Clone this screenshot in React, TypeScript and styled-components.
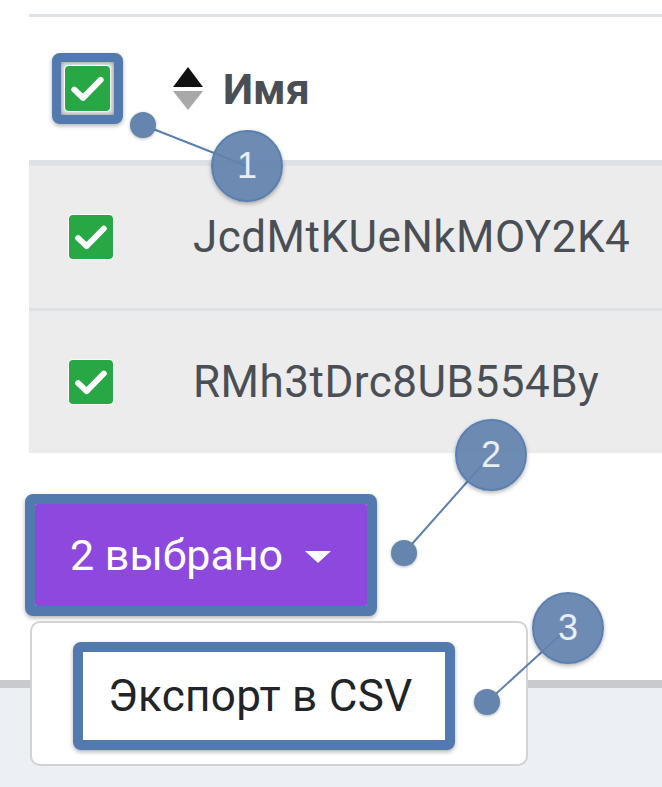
import React from "react";
import styled, { createGlobalStyle } from "styled-components";

const GlobalStyle = createGlobalStyle`
  html, body {
    margin: 0;
    padding: 0;
    background: #ffffff;
  }
  body {
    font-family: Roboto, "Noto Sans", Arial, sans-serif;
  }
`;

const Page = styled.div`
  position: relative;
  width: 662px;
  height: 787px;
  overflow: hidden;
  display: flex;
  flex-direction: column;
`;

const Table = styled.div`
  margin: 14px 0 0 29px;
  border-top: 3px solid #dee2e6;
  display: flex;
  flex-direction: column;
`;

const HeaderRow = styled.div`
  display: flex;
  align-items: center;
  height: 143px;
  padding-left: 23px;
  border-bottom: 6px solid #dee2e6;
  background: #ffffff;
`;

const Row = styled.div<{ $last?: boolean }>`
  display: flex;
  align-items: center;
  height: 142px;
  padding-left: 40px;
  background: #ececec;
  border-bottom: ${(p) => (p.$last ? "none" : "3px solid #dee2e6")};
`;

const Highlight = styled.div<{ $border: number; $pad?: number }>`
  display: inline-flex;
  align-items: center;
  border: ${(p) => p.$border}px solid #527aae;
  border-radius: 8px;
  padding: ${(p) => p.$pad ?? 0}px;
  box-shadow: 0 2px 4px rgba(0, 0, 0, 0.3), inset 0 0 5px rgba(0, 0, 0, 0.45);
  background: #e9e9e9;
`;

const CheckBox = styled.span<{ $size: number }>`
  display: inline-flex;
  align-items: center;
  justify-content: center;
  width: ${(p) => p.$size}px;
  height: ${(p) => p.$size}px;
  background: #28a745;
  border-radius: 4px;
  box-shadow: 0 0 0 1px #ffffff;
  flex-shrink: 0;
`;

const Check = ({ size }: { size: number }) => (
  <CheckBox $size={size}>
    <svg width={size} height={size} viewBox="0 0 24 24">
      <path
        d="M5 12.6l4.6 4.4L19 7.4"
        fill="none"
        stroke="#ffffff"
        strokeWidth="3.2"
        strokeLinecap="round"
        strokeLinejoin="round"
      />
    </svg>
  </CheckBox>
);

const SortIcon = styled.span`
  display: inline-flex;
  flex-direction: column;
  gap: 4px;
  margin-left: 50px;
  margin-right: 20px;
`;

const Arrow = styled.span<{ $down?: boolean }>`
  width: 0;
  height: 0;
  border-left: 15px solid transparent;
  border-right: 15px solid transparent;
  ${(p) =>
    p.$down
      ? "border-top: 19px solid #a9a9a9;"
      : "border-bottom: 20px solid #111111;"}
`;

const HeaderTitle = styled.span`
  font-family: Roboto, "Noto Sans", sans-serif;
  font-weight: 700;
  font-size: 43px;
  color: #4a4f55;
  line-height: 1;
  margin-top: 2px;
`;

const CellText = styled.span`
  font-family: Roboto, "Noto Sans", sans-serif;
  font-size: 44px;
  color: #4a4f55;
  margin-left: 80px;
  letter-spacing: 0.5px;
`;

const ActionArea = styled.div`
  position: relative;
  margin-top: 41px;
  padding-left: 25px;
  display: flex;
`;

const SelectButton = styled.button`
  display: flex;
  align-items: center;
  gap: 22px;
  width: 332px;
  height: 102px;
  padding: 0 0 0 35px;
  border: none;
  border-radius: 2px;
  background: #8d48de;
  color: #ffffff;
  font-family: Roboto, "Noto Sans", sans-serif;
  font-size: 43px;
  cursor: pointer;
`;

const Caret = styled.span`
  width: 0;
  height: 0;
  border-left: 13px solid transparent;
  border-right: 13px solid transparent;
  border-top: 12px solid #ffffff;
  margin-top: 4px;
`;

const Menu = styled.div`
  position: absolute;
  left: 30px;
  top: 127px;
  z-index: 2;
  width: 498px;
  height: 145px;
  box-sizing: border-box;
  padding: 19px 0 0 41px;
  background: #ffffff;
  border: 2px solid #d2d2d2;
  border-radius: 10px;
`;

const MenuItem = styled.div`
  display: flex;
  align-items: center;
  width: 362px;
  height: 88px;
  padding-left: 25px;
  box-sizing: border-box;
  background: #ffffff;
  font-family: Roboto, "Noto Sans", sans-serif;
  font-size: 44px;
  letter-spacing: 0.3px;
  color: #212529;
`;

const Footer = styled.div`
  margin-top: 64px;
  flex: 1;
  border-top: 8px solid #c8cacd;
  background: #eceff3;
`;

const Overlay = styled.div`
  position: absolute;
  inset: 0;
  z-index: 5;
  pointer-events: none;
`;

const Lines = styled.svg`
  position: absolute;
  inset: 0;
`;

const Dot = styled.span<{ $x: number; $y: number }>`
  position: absolute;
  left: ${(p) => p.$x - 13}px;
  top: ${(p) => p.$y - 13}px;
  width: 26px;
  height: 26px;
  border-radius: 50%;
  background: #6584ae;
  box-shadow: 0 1px 3px rgba(0, 0, 0, 0.3);
`;

const Badge = styled.span<{ $x: number; $y: number }>`
  position: absolute;
  left: ${(p) => p.$x - 36}px;
  top: ${(p) => p.$y - 36}px;
  width: 68px;
  height: 68px;
  border-radius: 50%;
  border: 2px solid #5a7fb1;
  background: rgba(98, 130, 172, 0.92);
  box-shadow: 0 2px 4px rgba(0, 0, 0, 0.3);
  display: flex;
  align-items: center;
  justify-content: center;
  font-family: "Liberation Sans", Arial, sans-serif;
  font-size: 36px;
  color: #e8eef6;
`;

const callouts = [
  { n: 1, dot: [143, 125], badge: [247, 166] },
  { n: 2, dot: [404, 553], badge: [491, 455] },
  { n: 3, dot: [487, 702], badge: [568, 628] },
];

const rows = ["JcdMtKUeNkMOY2K4", "RMh3tDrc8UB554By"];

export default function App() {
  return (
    <Page>
      <GlobalStyle />
      <Table>
        <HeaderRow>
          <Highlight $border={9} $pad={4}>
            <Check size={45} />
          </Highlight>
          <SortIcon>
            <Arrow />
            <Arrow $down />
          </SortIcon>
          <HeaderTitle>Имя</HeaderTitle>
        </HeaderRow>
        {rows.map((name, i) => (
          <Row key={name} $last={i === rows.length - 1}>
            <Check size={44} />
            <CellText>{name}</CellText>
          </Row>
        ))}
      </Table>

      <ActionArea>
        <Highlight $border={10}>
          <SelectButton>
            2 выбрано
            <Caret />
          </SelectButton>
        </Highlight>
        <Menu>
          <Highlight $border={10}>
            <MenuItem>Экспорт в CSV</MenuItem>
          </Highlight>
        </Menu>
      </ActionArea>

      <Footer />

      <Overlay>
        <Lines width="662" height="787">
          {callouts.map((c) => (
            <line
              key={c.n}
              x1={c.dot[0]}
              y1={c.dot[1]}
              x2={c.badge[0]}
              y2={c.badge[1]}
              stroke="#5a7fb1"
              strokeWidth="2"
            />
          ))}
        </Lines>
        {callouts.map((c) => (
          <React.Fragment key={c.n}>
            <Dot $x={c.dot[0]} $y={c.dot[1]} />
            <Badge $x={c.badge[0]} $y={c.badge[1]}>
              {c.n}
            </Badge>
          </React.Fragment>
        ))}
      </Overlay>
    </Page>
  );
}
